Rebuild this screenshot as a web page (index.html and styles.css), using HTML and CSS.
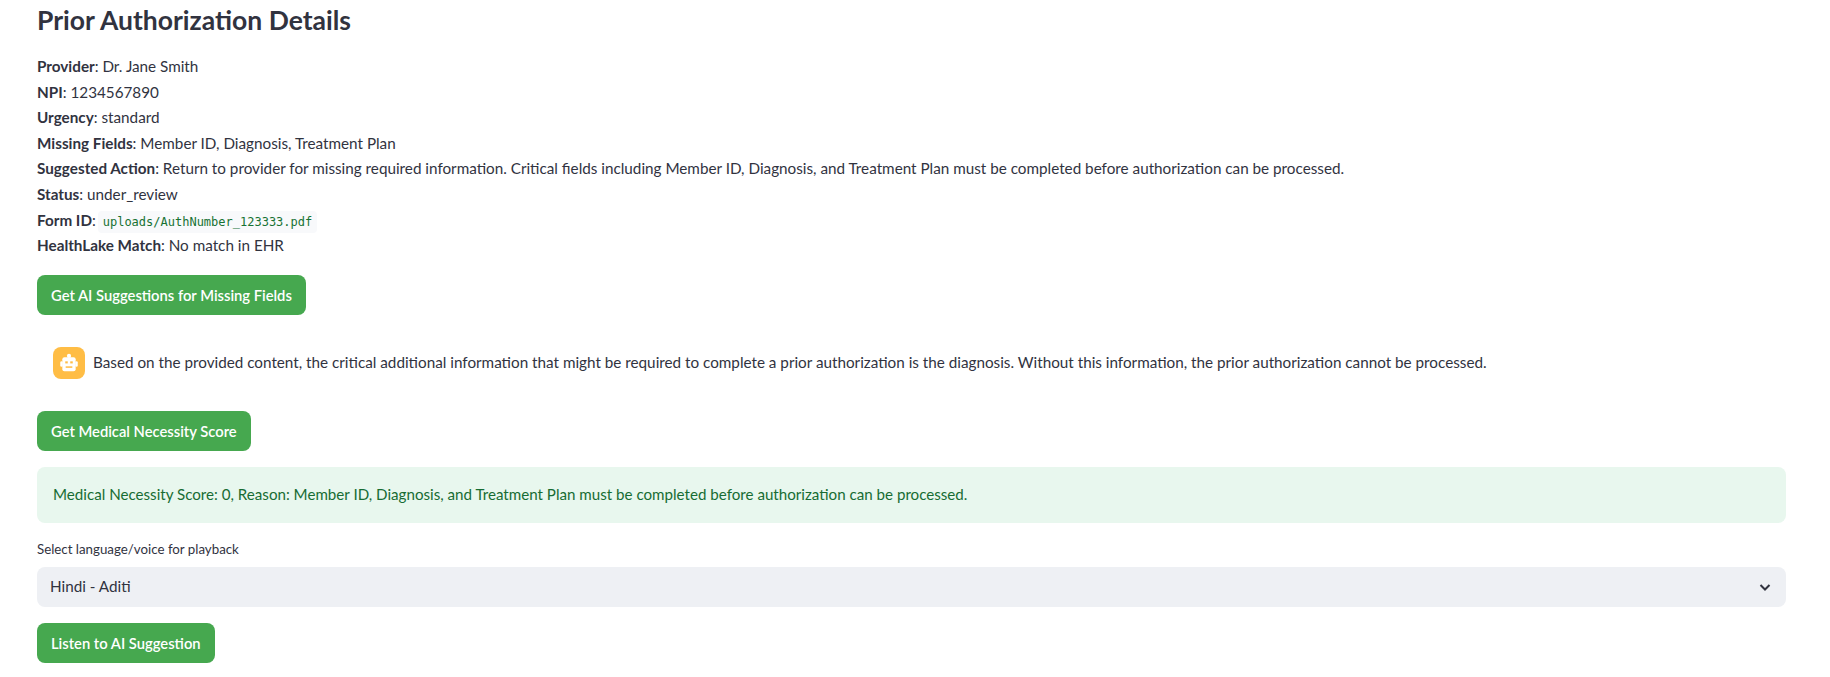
FILE: index.html
```html
<!DOCTYPE html>
<html lang="en">
<head>
    <meta charset="UTF-8">
    <title>Prior Authorization Details</title>
    <link rel="stylesheet" href="styles.css">
</head>
<body>
    <div class="main">
        <h2>Prior Authorization Details</h2>
        <div class="details">
            <p><strong>Provider</strong>: Dr. Jane Smith</p>
            <p><strong>NPI</strong>: 1234567890</p>
            <p><strong>Urgency</strong>: standard</p>
            <p><strong>Missing Fields</strong>: Member ID, Diagnosis, Treatment Plan</p>
            <p><strong>Suggested Action</strong>: Return to provider for missing required information. Critical fields including Member ID, Diagnosis, and Treatment Plan must be completed before authorization can be processed.</p>
            <p><strong>Status</strong>: under_review</p>
            <p><strong>Form ID</strong>: <code>uploads/AuthNumber_123333.pdf</code></p>
            <p><strong>HealthLake Match</strong>: No match in EHR</p>
        </div>
        <button class="btn">Get AI Suggestions for Missing Fields</button>
        <div class="chat-message">
            <div class="avatar">
                <svg width="20" height="20" viewBox="0 0 24 24" fill="#fff">
                    <circle cx="12" cy="3.500" r="2.500"/>
                    <rect x="4" y="5" width="16" height="17" rx="2.500"/>
                    <rect x="1.500" y="10" width="3" height="6.500" rx="1.500"/>
                    <rect x="19.500" y="10" width="3" height="6.500" rx="1.500"/>
                    <rect x="7.500" y="10" width="3" height="2.500" fill="#ffbd45"/>
                    <rect x="13.500" y="10" width="3" height="2.500" fill="#ffbd45"/>
                    <rect x="8" y="16" width="8" height="1.800" fill="#ffbd45"/>
                </svg>
            </div>
            <p>Based on the provided content, the critical additional information that might be required to complete a prior authorization is the diagnosis. Without this information, the prior authorization cannot be processed.</p>
        </div>
        <button class="btn">Get Medical Necessity Score</button>
        <div class="alert-success">Medical Necessity Score: 0, Reason: Member ID, Diagnosis, and Treatment Plan must be completed before authorization can be processed.</div>
        <label class="select-label">Select language/voice for playback</label>
        <div class="select-box">
            <span>Hindi - Aditi</span>
            <svg width="16" height="16" viewBox="0 0 16 16" fill="none" stroke="#31333f" stroke-width="2">
                <path d="M3.500 6l4.500 4.500L12.500 6"/>
            </svg>
        </div>
        <button class="btn">Listen to AI Suggestion</button>
    </div>
</body>
</html>
```

FILE: styles.css
```css
* {
    margin: 0;
    padding: 0;
    box-sizing: border-box;
}

body {
    background-color: #ffffff;
    color: #31333f;
    font-family: "Lato", "Open Sans", sans-serif;
    font-size: 15.25px;
    line-height: 25.6px;
    overflow: hidden;
}

.main {
    display: flex;
    flex-direction: column;
    align-items: flex-start;
    padding: 0 44px 0 37px;
}

h2 {
    font-size: 26.5px;
    font-weight: 700;
    line-height: 40px;
    margin-bottom: 14px;
}

.details {
    margin-bottom: 16px;
}

strong {
    font-weight: 700;
}

code {
    font-family: "DejaVu Sans Mono", "Liberation Mono", monospace;
    font-size: 12px;
    line-height: 1;
    color: #177233;
    background-color: #f8f9fb;
    border-radius: 4px;
    padding: 4px 5px;
    margin-left: -2px;
}

.btn {
    height: 40px;
    padding: 0 14px;
    background-color: #46a84f;
    color: #ffffff;
    border: none;
    border-radius: 8px;
    font-family: inherit;
    font-size: 14.75px;
    font-weight: 600;
}

.chat-message {
    display: flex;
    align-items: center;
    gap: 8px;
    width: 100%;
    padding: 16px;
    margin: 16px 0;
}

.avatar {
    width: 32px;
    height: 32px;
    flex-shrink: 0;
    display: flex;
    align-items: center;
    justify-content: center;
    background-color: #ffbd45;
    border-radius: 8px;
}

.alert-success {
    width: 100%;
    height: 56px;
    display: flex;
    align-items: center;
    padding: 0 16px;
    margin-top: 16px;
    background-color: #e8f7ee;
    color: #176c33;
    border-radius: 8px;
    font-size: 15.15px;
}

.select-label {
    font-size: 13.3px;
    line-height: 20px;
    margin-top: 16px;
    margin-bottom: 8px;
}

.select-box {
    width: 100%;
    height: 40px;
    display: flex;
    align-items: center;
    justify-content: space-between;
    padding: 0 13px;
    background-color: #eef0f4;
    border-radius: 8px;
    margin-bottom: 16px;
}
```
